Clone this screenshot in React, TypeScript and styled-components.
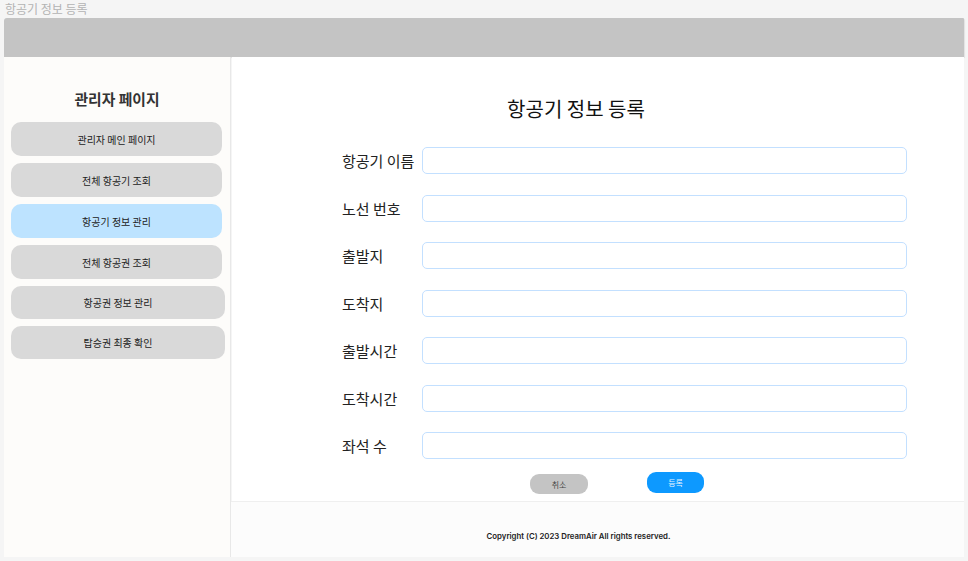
import React from "react";
import styled, { createGlobalStyle } from "styled-components";

const Global = createGlobalStyle`
  html, body { margin: 0; padding: 0; }
  body {
    background: #f5f5f5;
    font-family: "Noto Sans CJK KR", "Noto Sans", sans-serif;
    color: #222;
  }
  * { box-sizing: border-box; }
`;

const PageLabel = styled.div`
  height: 18px;
  padding-left: 5px;
  font-size: 12px;
  line-height: 18px;
  color: #b3b3b3;
`;

const Frame = styled.div`
  width: 960px;
  margin-left: 4px;
  display: flex;
  flex-direction: column;
`;

const Header = styled.header`
  height: 39px;
  background: #c4c4c4;
  border-radius: 3px 1px 0 0;
  box-shadow: 1px 1px 1px rgba(0, 0, 0, 0.08);
`;

const Body = styled.div`
  display: grid;
  grid-template-columns: 227px 1fr;
  height: 500px;
`;

const Sidebar = styled.aside`
  background: #fdfcfa;
  border-right: 1px solid #e8e8e8;
  padding: 32px 0 0 7px;
  display: flex;
  flex-direction: column;
`;

const SideTitle = styled.h2`
  margin: 0 0 13px;
  padding-right: 7px;
  text-align: center;
  font-size: 14.8px;
  line-height: 20px;
  font-weight: 700;
  color: #333;
`;

const NavList = styled.nav`
  display: flex;
  flex-direction: column;
  gap: 7px;
`;

const NavButton = styled.div<{ $active?: boolean; $wide?: boolean; $h: number }>`
  width: ${(p) => (p.$wide ? 214 : 211)}px;
  height: ${(p) => p.$h}px;
  border-radius: 10px;
  background: ${(p) => (p.$active ? "#bde3ff" : "#d9d9d9")};
  display: flex;
  align-items: center;
  justify-content: center;
  font-size: 10px;
  color: #222;
`;

const RightColumn = styled.div`
  display: flex;
  flex-direction: column;
`;

const Main = styled.main`
  flex: 1;
  background: #fff;
  padding: 40px 57px 0 110px;
  margin-left: 1px;
`;

const Title = styled.h1`
  margin: 0 97px 26px 0;
  text-align: center;
  font-size: 20px;
  line-height: 24px;
  font-weight: 400;
  color: #111;
`;

const Form = styled.div`
  display: flex;
  flex-direction: column;
  gap: 20.5px;
`;

const Row = styled.label`
  display: flex;
  align-items: center;
  height: 27px;
`;

const Label = styled.span`
  width: 80px;
  font-size: 15px;
  color: #222;
`;

const Input = styled.input`
  flex: 1;
  height: 27px;
  border: 1px solid #c3e0ff;
  border-radius: 5px;
  background: #fff;
  outline: none;
`;

const Actions = styled.div`
  display: flex;
  align-items: center;
  gap: 59px;
  margin: 13px 0 0 188px;
`;

const ActionButton = styled.button<{ $primary?: boolean }>`
  width: ${(p) => (p.$primary ? 57 : 58)}px;
  height: ${(p) => (p.$primary ? 21 : 20)}px;
  margin-top: ${(p) => (p.$primary ? -2 : 2)}px;
  border: none;
  border-radius: 9px;
  background: ${(p) => (p.$primary ? "#0d99ff" : "#c4c4c4")};
  color: ${(p) => (p.$primary ? "#e8f4ff" : "#444")};
  font-family: inherit;
  font-size: 8px;
  padding: 0;
`;

const Footer = styled.footer`
  height: 56px;
  background: #fcfcfc;
  border-top: 1px solid #efefef;
  display: flex;
  align-items: center;
  justify-content: center;
  padding: 12px 38px 0 0;
  font-family: Inter, "Noto Sans", sans-serif;
  font-size: 7.8px;
  font-weight: 600;
  color: #222;
`;

const navItems = [
  { label: "관리자 메인 페이지", h: 34 },
  { label: "전체 항공기 조회", h: 34 },
  { label: "항공기 정보 관리", h: 34, active: true },
  { label: "전체 항공권 조회", h: 34 },
  { label: "항공권 정보 관리", h: 33, wide: true },
  { label: "탑승권 최종 확인", h: 33, wide: true },
];

const fields = ["항공기 이름", "노선 번호", "출발지", "도착지", "출발시간", "도착시간", "좌석 수"];

export default function App() {
  return (
    <>
      <Global />
      <PageLabel>항공기 정보 등록</PageLabel>
      <Frame>
        <Header />
        <Body>
          <Sidebar>
            <SideTitle>관리자 페이지</SideTitle>
            <NavList>
              {navItems.map((n) => (
                <NavButton key={n.label} $active={n.active} $wide={n.wide} $h={n.h}>
                  {n.label}
                </NavButton>
              ))}
            </NavList>
          </Sidebar>
          <RightColumn>
            <Main>
              <Title>항공기 정보 등록</Title>
              <Form>
                {fields.map((f) => (
                  <Row key={f}>
                    <Label>{f}</Label>
                    <Input />
                  </Row>
                ))}
              </Form>
              <Actions>
                <ActionButton>취소</ActionButton>
                <ActionButton $primary>등록</ActionButton>
              </Actions>
            </Main>
            <Footer>Copyright (C) 2023 DreamAir All rights reserved.</Footer>
          </RightColumn>
        </Body>
      </Frame>
    </>
  );
}
